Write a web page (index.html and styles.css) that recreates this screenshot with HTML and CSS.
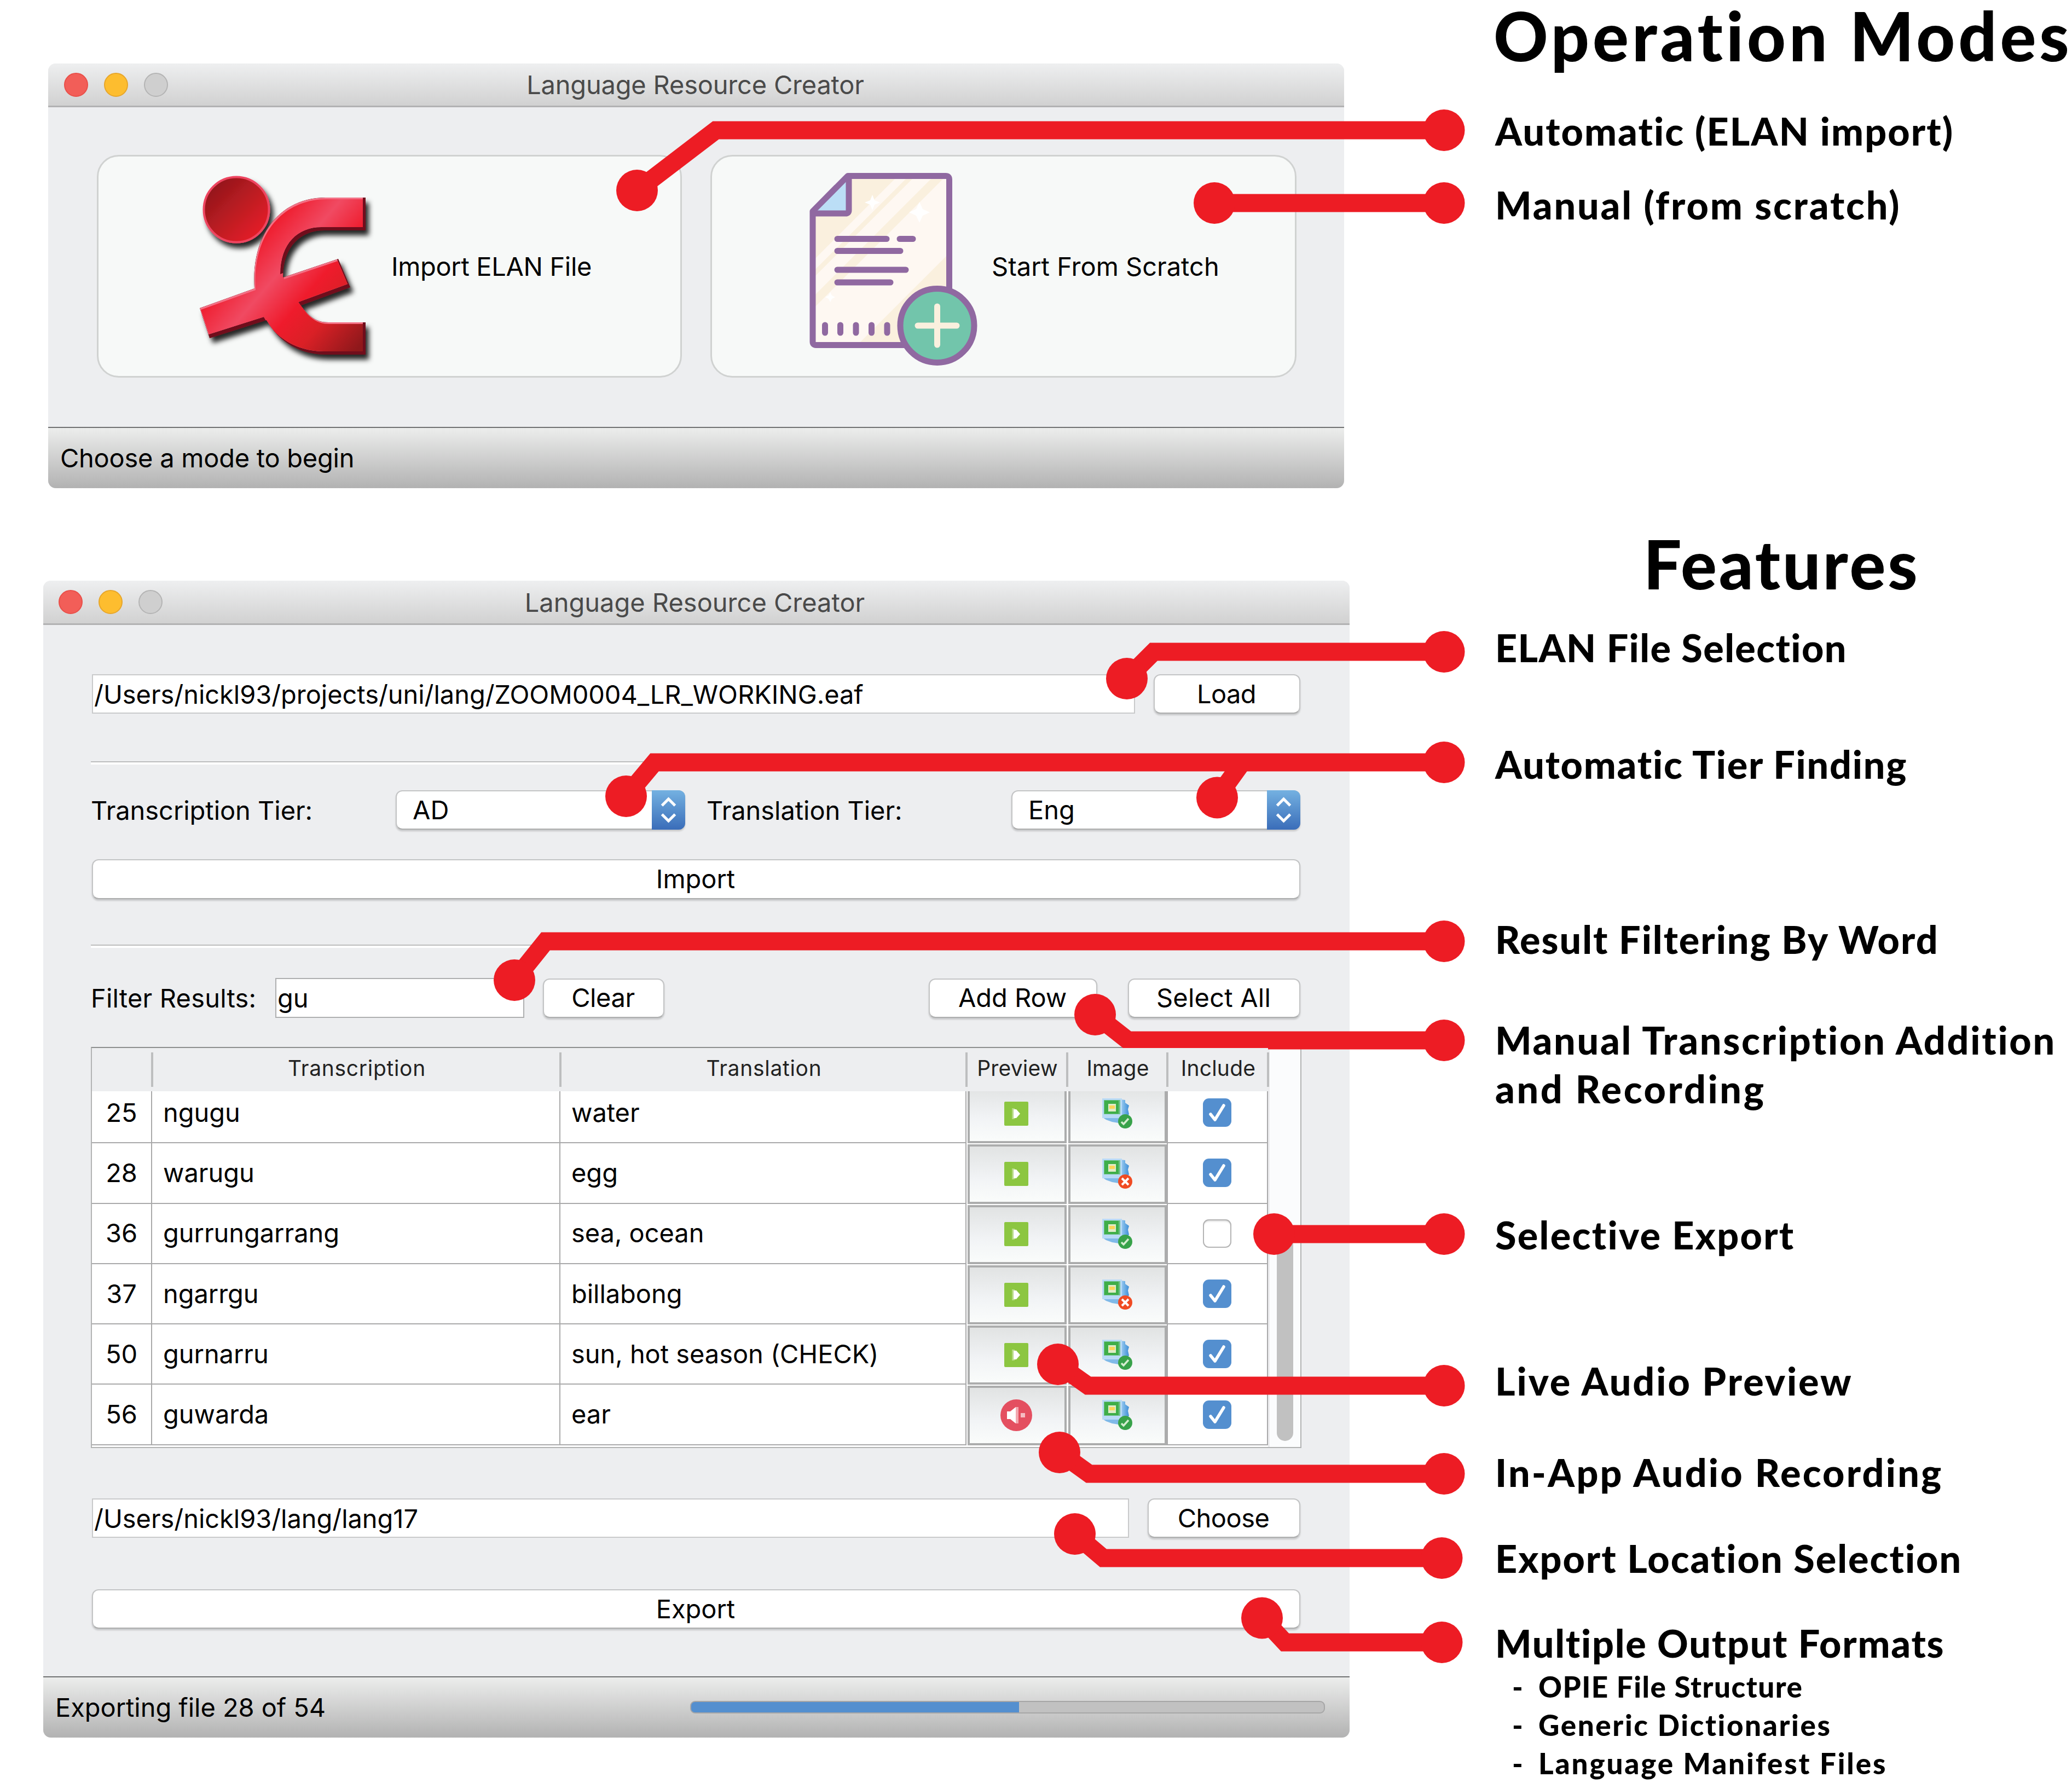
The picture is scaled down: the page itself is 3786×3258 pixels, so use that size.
FILE: index.html
```html
<!DOCTYPE html>
<html lang="en">
<head>
<meta charset="utf-8">
<title>Language Resource Creator</title>
<link rel="stylesheet" href="styles.css">
</head>
<body>
<svg class="defs" width="0" height="0" aria-hidden="true">
  <defs>
    <linearGradient id="slideBack" x1="0" y1="0" x2="1" y2="0"><stop offset="0" stop-color="#9ccdf2"/><stop offset="1" stop-color="#3f8fd6"/></linearGradient>
    <symbol id="play" viewBox="0 0 44 44">
      <rect width="44" height="44" rx="2" fill="#8cc641"/>
      <path d="M14 12h5v20h-5z" fill="#b5da84"/><path d="M17 14h5l7 8-7 8h-5z" fill="#fff"/>
    </symbol>
    <symbol id="mute" viewBox="0 0 58 58">
      <circle cx="29" cy="29" r="29" fill="#e44f60"/>
      <path d="M12 22h6l10-8v30l-10-8h-6z" fill="#fff"/><path d="M28 14h5v30h-5z" fill="#f2a7af"/><path d="M37 25h8v8h-8z" fill="#f5bcc2"/>
    </symbol>
    <symbol id="pics" viewBox="0 0 55 55">
      <path d="M34 2l8 1v5l7 5-2 7 2 9-5 6-10-2z" fill="url(#slideBack)"/>
      <path d="M1 35l6 4 11 4 12 2V30H1z" fill="#7fb9e8"/>
      <rect width="36" height="36" fill="#b9daf6"/>
      <rect x="3" y="3" width="30" height="26" fill="#6fc08a"/><rect x="4" y="4" width="26" height="24" fill="#3fae49"/>
      <rect x="11" y="10" width="14" height="14" fill="#dfecc9"/><path d="M13 13h10v6H13z" fill="#fcd55a"/>
    </symbol>
    <symbol id="ok" viewBox="0 0 26 26"><circle cx="13" cy="13" r="13" fill="#38a24a"/><path d="M6 14l4 4 9-10" fill="none" stroke="#d5edd0" stroke-width="3.5"/></symbol>
    <symbol id="bad" viewBox="0 0 26 26"><circle cx="13" cy="13" r="13" fill="#f04b23"/><path d="M7 7l12 12M19 7L7 19" stroke="#fff" stroke-width="4"/></symbol>
    <symbol id="tick" viewBox="0 0 52 52"><path d="M14 29l8 10 16-26" fill="none" stroke="#fff" stroke-width="5.500" stroke-linecap="round" stroke-linejoin="round"/></symbol>
    <symbol id="updown" viewBox="0 0 60 72"><path d="M18 28l12-12 12 12M18 44l12 12 12-12" fill="none" stroke="#fff" stroke-width="5"/></symbol>
  </defs>
</svg>

<div class="poster">
  <main class="windows">
    <section class="window start-window">
      <header class="titlebar"><i class="light red"></i><i class="light yellow"></i><i class="light grey"></i><span class="title">Language Resource Creator</span></header>
      <div class="modes">
        <button class="mode">
          <svg class="elan" viewBox="350 320 330 340" width="330" height="340">
            <defs>
              <linearGradient id="head" x1="0.1" y1="0.1" x2="0.9" y2="0.9"><stop offset="0" stop-color="#8f171b"/><stop offset="1" stop-color="#e81f29"/></linearGradient>
              <linearGradient id="body" gradientUnits="userSpaceOnUse" x1="437" y1="470" x2="642" y2="645"><stop offset="0" stop-color="#ef1b2c"/><stop offset=".26" stop-color="#f04a62"/><stop offset=".5" stop-color="#ef1b2c"/><stop offset=".7" stop-color="#da2026"/><stop offset="1" stop-color="#8f181b"/></linearGradient>
              <filter id="shade" x="-20%" y="-20%" width="150%" height="150%"><feDropShadow dx="6" dy="9" stdDeviation="5" flood-color="#000" flood-opacity=".85"/></filter>
              <path id="figure" d="M668 361H595C515 361 458 425 465 527L365 563 383 618 487 585C510 626 550 648 597 648H668V589H600C576 589 562 576 550 558L640 525 618 473 517 507C517 450 550 421 592 421H668Z"/>
              <clipPath id="figureClip"><use href="#figure"/></clipPath>
              <clipPath id="faceClip"><use href="#figure" transform="translate(-5 -6)"/></clipPath>
            </defs>
            <g filter="url(#shade)">
              <circle cx="432" cy="383" r="59.500" fill="url(#head)" stroke="#ee4560" stroke-width="4"/>
              <use href="#figure" fill="#70101a"/>
            </g>
            <g clip-path="url(#figureClip)"><g clip-path="url(#faceClip)"><use href="#figure" fill="#f47186"/><use href="#figure" fill="url(#body)" transform="translate(2 3)"/></g></g>
          </svg>
          <span>Import ELAN File</span>
        </button>
        <button class="mode scratch">
          <svg class="page" viewBox="1470 310 330 365" width="330" height="365">
            <defs><clipPath id="sheet"><path d="M1552 321H1728Q1734 321 1734 328V624Q1734 630 1728 630H1491Q1485 630 1485 624V390Z"/></clipPath></defs>
            <g clip-path="url(#sheet)">
              <rect x="1480" y="316" width="260" height="320" fill="#faf0de"/>
              <g fill="#fef8f2">
                <path d="M1662 300L1362 600H1382L1682 300Z"/><path d="M1694 300L1394 600H1428L1728 300Z"/><path d="M1750 300L1400 650H1547L1897 300Z"/>
              </g>
              <g fill="#fff">
                <path d="M1680 369l6 13 13 6-13 6-6 13-6-13-13-6 13-6z"/><path d="M1594 356l4 10 10 4-10 4-4 10-4-10-10-4 10-4z"/><path d="M1517 534l3 6 6 3-6 3-3 6-3-6-6-3 6-3z"/>
              </g>
            </g>
            <path d="M1551 323V388H1487Z" fill="#bbdef6"/>
            <g fill="none" stroke="#9069a1" stroke-width="11" stroke-linejoin="round" stroke-linecap="round">
              <path d="M1549 321.500H1728Q1734.500 321.500 1734.500 328V624Q1734.500 630.500 1728 630.500H1491Q1485 630.500 1485 624V386Z"/>
              <path d="M1551 323V384Q1551 390 1545 390H1487"/>
              <path d="M1530 436.500H1620M1644 436.500H1668M1530 458.500H1645M1530 493H1655M1530 516H1627"/>
              <path d="M1507.500 594V608M1535.500 594V608M1564 594V608M1592.500 594V608M1621 594V608"/>
            </g>
            <circle cx="1712.500" cy="595" r="67.500" fill="#72c5ab" stroke="#9069a1" stroke-width="11"/>
            <path d="M1677 595H1748M1712.500 560V630" stroke="#faf0de" stroke-width="11" stroke-linecap="round"/>
          </svg>
          <span>Start From Scratch</span>
        </button>
      </div>
      <footer class="status"><span>Choose a mode to begin</span></footer>
    </section>

    <section class="window main-window">
      <header class="titlebar"><i class="light red"></i><i class="light yellow"></i><i class="light grey"></i><span class="title">Language Resource Creator</span></header>
      <div class="form">
        <div class="row file-row"><div class="field">/Users/nickl93/projects/uni/lang/ZOOM0004_LR_WORKING.eaf</div><button class="btn load">Load</button></div>
        <hr class="rule rule-a">
        <div class="row tier-row">
          <label class="tier-label">Transcription Tier:</label>
          <div class="combo combo-a"><span>AD</span><svg class="stepper"><use href="#updown"/></svg></div>
          <label class="tier-label second">Translation Tier:</label>
          <div class="combo combo-b"><span>Eng</span><svg class="stepper"><use href="#updown"/></svg></div>
        </div>
        <button class="btn wide import">Import</button>
        <hr class="rule rule-b">
        <div class="row filter-row">
          <label class="filter-label">Filter Results:</label>
          <div class="field filter-field">gu</div>
          <button class="btn clear">Clear</button>
          <button class="btn add">Add Row</button>
          <button class="btn all">Select All</button>
        </div>
        <div class="results">
          <div class="grid">
            <div class="tr head"><div></div><div class="spread">Transcription</div><div class="spread">Translation</div><div>Preview</div><div>Image</div><div>Include</div></div>
            <div class="tbody">
              <div class="tr"><div class="num">25</div><div>ngugu</div><div>water</div><div class="cell"><svg class="i44"><use href="#play"/></svg></div><div class="cell"><svg class="i55"><use href="#pics"/><use href="#ok" x="29" y="29" width="26" height="26"/></svg></div><div class="inc"><svg class="check on"><use href="#tick"/></svg></div></div>
              <div class="tr"><div class="num">28</div><div>warugu</div><div>egg</div><div class="cell"><svg class="i44"><use href="#play"/></svg></div><div class="cell"><svg class="i55"><use href="#pics"/><use href="#bad" x="29" y="29" width="26" height="26"/></svg></div><div class="inc"><svg class="check on"><use href="#tick"/></svg></div></div>
              <div class="tr"><div class="num">36</div><div>gurrungarrang</div><div>sea, ocean</div><div class="cell"><svg class="i44"><use href="#play"/></svg></div><div class="cell"><svg class="i55"><use href="#pics"/><use href="#ok" x="29" y="29" width="26" height="26"/></svg></div><div class="inc"><svg class="check"></svg></div></div>
              <div class="tr"><div class="num">37</div><div>ngarrgu</div><div>billabong</div><div class="cell"><svg class="i44"><use href="#play"/></svg></div><div class="cell"><svg class="i55"><use href="#pics"/><use href="#bad" x="29" y="29" width="26" height="26"/></svg></div><div class="inc"><svg class="check on"><use href="#tick"/></svg></div></div>
              <div class="tr"><div class="num">50</div><div>gurnarru</div><div>sun, hot season (CHECK)</div><div class="cell"><svg class="i44"><use href="#play"/></svg></div><div class="cell"><svg class="i55"><use href="#pics"/><use href="#ok" x="29" y="29" width="26" height="26"/></svg></div><div class="inc"><svg class="check on"><use href="#tick"/></svg></div></div>
              <div class="tr"><div class="num">56</div><div>guwarda</div><div>ear</div><div class="cell"><svg class="i58"><use href="#mute"/></svg></div><div class="cell"><svg class="i55"><use href="#pics"/><use href="#ok" x="29" y="29" width="26" height="26"/></svg></div><div class="inc"><svg class="check on"><use href="#tick"/></svg></div></div>
            </div>
          </div>
          <div class="scroll"><div class="thumb"></div></div>
        </div>
        <div class="row dest-row"><div class="field">/Users/nickl93/lang/lang17</div><button class="btn choose">Choose</button></div>
        <button class="btn wide export">Export</button>
      </div>
      <footer class="status"><span>Exporting file 28 of 54</span><div class="progress"><div class="bar"></div></div></footer>
    </section>
  </main>

  <aside class="notes">
    <h1 class="h-modes">Operation Modes</h1>
    <p class="n1">Automatic (ELAN import)</p>
    <p class="n2">Manual (from scratch)</p>
    <h1 class="h-features">Features</h1>
    <p class="n3">ELAN File Selection</p>
    <p class="n4">Automatic Tier Finding</p>
    <p class="n5">Result Filtering By Word</p>
    <p class="n6">Manual Transcription Addition<br><span class="second-line">and Recording</span></p>
    <p class="n7">Selective Export</p>
    <p class="n8">Live Audio Preview</p>
    <p class="n9">In-App Audio Recording</p>
    <p class="n10">Export Location Selection</p>
    <p class="n11">Multiple Output Formats</p>
    <ul class="formats">
      <li class="f1">OPIE File Structure</li>
      <li class="f2">Generic Dictionaries</li>
      <li class="f3">Language Manifest Files</li>
    </ul>
  </aside>

  <svg class="leaders" viewBox="0 0 3786 3258">
    <g fill="none" stroke="#ed1c24" stroke-width="33">
      <path d="M1164 348L1308 238H2638"/><path d="M2219 371H2638"/>
      <path d="M2059 1240L2108 1191H2638"/><path d="M1144 1455L1196 1393H2638M2224 1457L2270 1393"/>
      <path d="M940 1791L997 1720H2638"/><path d="M2001 1854L2061 1901H2638"/>
      <path d="M2328 2255H2638"/><path d="M1933 2493L1988 2532H2638"/>
      <path d="M1936 2654L1990 2693H2638"/><path d="M1964 2803L2016 2847H2634"/><path d="M2306 2956L2348 3001H2634"/>
    </g>
    <g fill="#ed1c24">
      <circle cx="1164" cy="348" r="38"/><circle cx="2638.500" cy="238" r="38"/><circle cx="2219" cy="371" r="38"/><circle cx="2638.500" cy="371" r="38"/>
      <circle cx="2059" cy="1240" r="38"/><circle cx="2638.500" cy="1191" r="38"/><circle cx="1144" cy="1455" r="38"/><circle cx="2224" cy="1457.500" r="38"/><circle cx="2638.500" cy="1393" r="38"/>
      <circle cx="940" cy="1791" r="38"/><circle cx="2638.500" cy="1720" r="38"/><circle cx="2001" cy="1854" r="38"/><circle cx="2638.500" cy="1901" r="38"/>
      <circle cx="2328" cy="2255" r="38"/><circle cx="2638.500" cy="2255" r="38"/><circle cx="1933" cy="2493" r="38"/><circle cx="2638.500" cy="2532" r="38"/>
      <circle cx="1936" cy="2654" r="38"/><circle cx="2638.500" cy="2693" r="38"/><circle cx="1964" cy="2803" r="38"/><circle cx="2634.500" cy="2847" r="38"/>
      <circle cx="2306" cy="2956.500" r="38"/><circle cx="2634.500" cy="3001" r="38"/>
    </g>
  </svg>
</div>
</body>
</html>
```
FILE: styles.css
```css
* { box-sizing: border-box; }
body { margin: 0; background: #fff; color: #000; font-family: Inter, "Liberation Sans", sans-serif; font-size: 47px; letter-spacing: -.05px; }
.defs { position: absolute; }
.poster { position: relative; display: grid; grid-template-columns: 2732px 1054px; width: 3786px; height: 3258px; overflow: hidden; }
.leaders { position: absolute; inset: 0; width: 3786px; height: 3258px; }
button { font: inherit; color: inherit; letter-spacing: inherit; margin: 0; padding: 0; }

/* windows */
.windows { padding: 116px 0 0 79px; }
.window { display: flex; flex-direction: column; background: #edeef0; border-radius: 14px; overflow: hidden; }
.start-window { width: 2368px; height: 776px; margin-left: 9px; }
.main-window { width: 2387px; height: 2114px; margin-top: 169px; }
.titlebar { flex: none; display: flex; align-items: center; gap: 29px; position: relative; height: 80px; padding-left: 29px; background: linear-gradient(#eeeff0, #d1d1d1); border-bottom: 3px solid #b2b2b3; }
.main-window .titlebar { padding-left: 28px; height: 81px; }
.title { position: absolute; left: 0; right: 3px; text-align: center; color: #4a4a4a; letter-spacing: -.2px; }
.main-window .title { right: 6px; letter-spacing: 0; }
.light { width: 44px; height: 44px; border-radius: 50%; border: 2px solid; }
.red { background: #f25e58; border-color: #e94f49; }
.yellow { background: #fdbd2f; border-color: #e7a62a; }
.grey { background: #cfcfcf; border-color: #b4b4b4; }
.status { flex: none; display: flex; align-items: center; height: 112px; border-top: 2px solid #707172; background: linear-gradient(#ecedec, #b2b2b2); padding: 0 0 2px 22px; letter-spacing: -.25px; }

.modes { flex: 1; display: flex; gap: 52px; padding: 87px 87px 0 89px; }
.mode { display: flex; align-items: center; width: 1069px; height: 407px; background: #f7f9f8; border: 3px solid #d0d2d1; border-radius: 40px; letter-spacing: -.35px; }
.elan { flex: none; overflow: visible; margin: 6px 35px 0 170px; }
.page { flex: none; margin: 11px 12px 0 169px; }
.mode.scratch { width: 1071px; letter-spacing: 0; }

/* form */
.form { flex: 1; padding: 90px 90px 0 89px; }
.row { display: flex; align-items: center; height: 72px; }
.field { flex: 1; height: 72px; display: flex; align-items: center; background: #fff; border: 2px solid #c9cacb; padding-left: 2px; }
.btn { display: flex; align-items: center; justify-content: center; height: 72px; background: #fff; border: 2px solid #c3c4c5; border-bottom-color: #adaeae; border-radius: 12px; box-shadow: 0 3px 3px rgba(0,0,0,.16); padding: 0 2px 2px 0; }
.wide { width: 100%; }
.load { width: 268px; margin-left: 34px; letter-spacing: -.6px; }
.rule { height: 6px; margin: 0 -2px; border: 0; border-top: 2px solid #bcbdbd; background: #fff; }
.rule-a { margin-top: 87px; }
.tier-row { margin-top: 47px; }
.tier-label { width: 557px; margin-left: -2px; }
.tier-label.second { margin-left: 39px; width: 557px; }
.combo { position: relative; height: 72px; display: flex; align-items: center; background: #fff; border: 2px solid #c3c4c5; border-bottom-color: #adaeae; border-radius: 12px; padding: 0 0 2px 29px; box-shadow: 0 3px 3px rgba(0,0,0,.16); }
.combo-a { width: 529px; }
.combo-b { flex: 1; }
.stepper { position: absolute; right: -2px; top: -2px; width: 61px; height: 72px; border-radius: 0 12px 12px 0; background: linear-gradient(#74b1e1, #3a6db9); }
.import { margin-top: 54px; height: 73px; }
.rule-b { margin-top: 83px; }
.filter-row { margin-top: 55px; height: 73px; }
.filter-label { width: 337px; margin-left: -2px; letter-spacing: .2px; }
.filter-field { flex: none; width: 455px; border-color: #aeafb0; height: 73px; }
.clear { width: 222px; margin-left: 34px; letter-spacing: -.4px; }
.add { width: 308px; margin-left: auto; }
.all { width: 315px; margin-left: 56px; letter-spacing: .2px; }
.choose { width: 279px; margin-left: 34px; letter-spacing: -.5px; }
.dest-row { margin-top: 92px; }
.export { margin-top: 94px; }

/* results table */
.results { display: flex; margin: 53px -2px 0; height: 733px; border: 2px solid #b2b3b3; border-top-color: #8d8f8f; background: #fff; overflow: hidden; }
.grid { width: 2149px; }
.tr { display: grid; grid-template-columns: 110px 746px 742px 184px 183px 184px; height: 110.3px; }
.tr > div { display: flex; align-items: center; border-right: 2px solid #a9a9aa; border-bottom: 2px solid #a9a9aa; padding: 0 0 2px 20px; }
.head { position: relative; z-index: 1; height: 79px; background: #edeef0; font-size: 39px; color: #222; letter-spacing: .2px; }
.head .spread { letter-spacing: .7px; }
.tr.head > div { justify-content: center; padding: 0 0 7px 2px; margin: 8px -2px 8px 2px; border-bottom: 0; border-right: 4px solid #bdbebf; }
.tbody { margin-top: -15px; }
.tr > .num { justify-content: center; padding: 0 0 2px; }
.tr > .cell { padding: 0 3px 1px 0; margin: 2px 1px 0 2px; justify-content: center; border: 4px solid #acadad; background: linear-gradient(#e1e3e3, #f2f4f6 60%, #fafcfb); }
.tr > .cell:nth-child(5) { padding: 0 1px 2px 0; }
.tr > .inc { justify-content: center; padding: 0 2px 0 0; border-left: 2px solid #a9a9aa; margin-left: -1px; }
.i44 { width: 44px; height: 44px; }
.i55 { width: 55px; height: 55px; }
.i58 { width: 58px; height: 58px; }
.check { width: 52px; height: 52px; border-radius: 11px; background: #fff; box-shadow: inset 0 0 0 2px #b4b4b4, inset 0 4px 3px #ddd; }
.check.on { background: #548fcf; box-shadow: none; }
.scroll { flex: 1; display: flex; flex-direction: column; justify-content: flex-end; align-items: center; background: #fbfcfd; border-left: 3px solid #ececee; padding-bottom: 11px; }
.thumb { width: 30px; height: 385px; border-radius: 15px; background: #c1c1c1; }

.main-window .status { padding: 0 45px 2px 22px; justify-content: space-between; letter-spacing: -.05px; }
.progress { width: 1160px; height: 23px; border: 2px solid #a6a6a6; border-radius: 9px; background: #c1c1c1; overflow: hidden; }
.bar { width: 601px; height: 23px; margin: -2px 0 0 -2px; background: #548fcf; border: 2px solid #447fc4; border-right: 0; border-radius: 9px 0 0 9px; }

/* callouts */
.notes { font-family: Lato, "Liberation Sans", sans-serif; font-weight: 900; font-size: 70px; line-height: 89px; letter-spacing: 2px; white-space: nowrap; }
.notes h1 { margin: 0; font-size: 123px; line-height: 130px; font-weight: 900; }
.notes p { margin: 0; }
.notes .h-modes { letter-spacing: 6px; margin-left: -3px; }
.notes .n1 { margin-top: 65px; letter-spacing: 2.100px; }
.notes .n2 { margin-top: 46px; letter-spacing: 2.900px; }
.notes .h-features { margin: 546px 0 0 271px; letter-spacing: 3.900px; }
.notes .n3 { margin-top: 44px; letter-spacing: 1.400px; }
.notes .n4 { margin-top: 124px; letter-spacing: 1.800px; }
.notes .n5 { margin-top: 231px; }
.notes .n6 { margin-top: 95px; letter-spacing: 2.750px; }
.second-line { letter-spacing: 3.650px; }
.notes .n7 { margin-top: 178px; letter-spacing: 2.300px; }
.notes .n8 { margin-top: 178px; letter-spacing: 2.950px; }
.notes .n9 { margin-top: 78px; letter-spacing: 3.200px; }
.notes .n10 { margin-top: 68px; }
.notes .n11 { margin-top: 66px; letter-spacing: 1.800px; }
.formats { list-style: none; margin: 0; padding: 0 0 0 31px; font-size: 53px; line-height: 70px; }
.formats li::before { content: "-"; display: inline-block; width: 48px; }
.f1 { letter-spacing: 1.500px; }
.f2 { letter-spacing: 2.600px; }
.f3 { letter-spacing: 2.850px; }
```
